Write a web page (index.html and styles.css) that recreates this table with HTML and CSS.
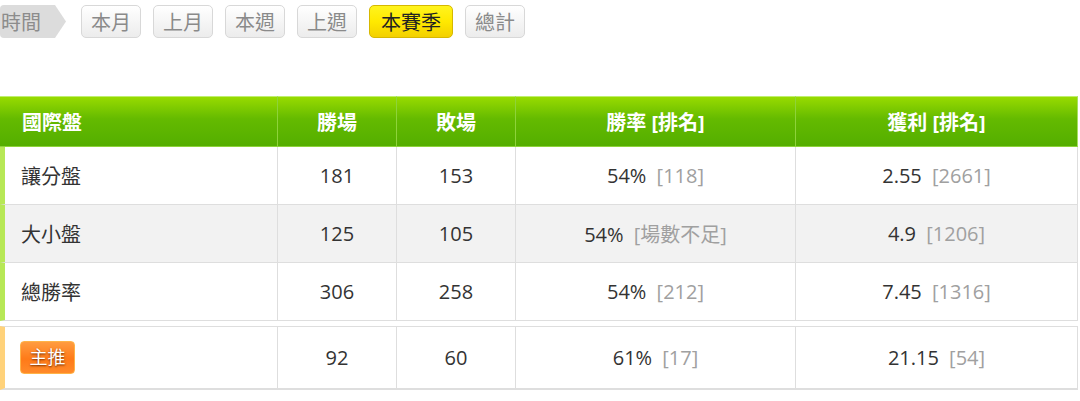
FILE: index.html
```html
<!DOCTYPE html>
<html lang="zh-Hant">
<head>
  <meta charset="UTF-8">
  <title>國際盤</title>
  <link rel="stylesheet" href="styles.css">
</head>
<body>
  <div class="filter-bar">
    <span class="filter-label">時間</span>
    <a class="filter-btn">本月</a>
    <a class="filter-btn">上月</a>
    <a class="filter-btn">本週</a>
    <a class="filter-btn">上週</a>
    <a class="filter-btn active">本賽季</a>
    <a class="filter-btn">總計</a>
  </div>

  <table class="stats">
    <colgroup>
      <col class="c-name"><col class="c-num"><col class="c-num"><col class="c-rate"><col class="c-profit">
    </colgroup>
    <thead>
      <tr>
        <th class="name">國際盤</th>
        <th>勝場</th>
        <th>敗場</th>
        <th>勝率 [排名]</th>
        <th>獲利 [排名]</th>
      </tr>
    </thead>
    <tbody>
      <tr>
        <td class="name">讓分盤</td>
        <td>181</td>
        <td>153</td>
        <td>54% <span class="rank">[118]</span></td>
        <td>2.55 <span class="rank">[2661]</span></td>
      </tr>
      <tr class="alt">
        <td class="name">大小盤</td>
        <td>125</td>
        <td>105</td>
        <td>54% <span class="rank">[場數不足]</span></td>
        <td>4.9 <span class="rank">[1206]</span></td>
      </tr>
      <tr>
        <td class="name">總勝率</td>
        <td>306</td>
        <td>258</td>
        <td>54% <span class="rank">[212]</span></td>
        <td>7.45 <span class="rank">[1316]</span></td>
      </tr>
    </tbody>
  </table>

  <table class="stats featured">
    <colgroup>
      <col class="c-name"><col class="c-num"><col class="c-num"><col class="c-rate"><col class="c-profit">
    </colgroup>
    <tbody>
      <tr>
        <td class="name"><span class="badge">主推</span></td>
        <td>92</td>
        <td>60</td>
        <td>61% <span class="rank">[17]</span></td>
        <td>21.15 <span class="rank">[54]</span></td>
      </tr>
    </tbody>
  </table>
</body>
</html>
```

FILE: styles.css
```css
body {
  margin: 0;
  background: #fff;
  font-family: "Open Sans", "Noto Sans CJK TC", sans-serif;
  color: #333;
}

.filter-bar {
  display: flex;
  align-items: center;
  gap: 12px;
  padding-top: 5px;
  height: 33px;
}

.filter-label {
  display: flex;
  align-items: center;
  height: 33px;
  width: 66px;
  padding-left: 1px;
  box-sizing: border-box;
  background: #dcdcdc;
  color: #8c8c8c;
  font-size: 20px;
  clip-path: polygon(0 0, 55px 0, 66px 50%, 55px 100%, 0 100%);
  border-radius: 4px 0 0 4px;
  margin-right: 3px;
}

.filter-btn {
  display: flex;
  align-items: center;
  justify-content: center;
  height: 33px;
  padding: 0 9px;
  box-sizing: border-box;
  border: 1px solid #d8d8d8;
  border-radius: 5px;
  background: linear-gradient(#ffffff, #ececec);
  color: #8a8a8a;
  font-size: 20px;
}

.filter-btn.active {
  padding: 0 11px;
  background: linear-gradient(#fff41e 0%, #ffe900 50%, #f3d000 100%);
  border-color: #d6b800;
  color: #222;
}

.stats {
  width: 1078px;
  border-collapse: separate;
  border-spacing: 0;
  table-layout: fixed;
  font-size: 20px;
}

.stats:first-of-type {
  margin-top: 58px;
}

.c-name { width: 278px; }
.c-num { width: 119px; }
.c-rate { width: 280px; }
.c-profit { width: 282px; }

.stats th {
  height: 51px;
  padding: 0;
  box-sizing: border-box;
  background: linear-gradient(#98db00 0%, #64ba00 45%, #54ae00 100%);
  color: #fff;
  font-weight: bold;
  text-align: center;
  border-top: 1px solid #bfee70;
  border-right: 1px solid #8ed33a;
  border-bottom: 1px solid #8ed33a;
}

.stats th:last-child {
  border-right-color: #a6e060;
}

.stats th.name {
  text-align: left;
  padding-left: 22px;
}

.stats td {
  height: 58px;
  padding: 0;
  box-sizing: border-box;
  text-align: center;
  border-right: 1px solid #dedede;
  border-bottom: 1px solid #dedede;
}

.stats tr.alt td {
  background: #f2f2f2;
}

.stats td.name {
  text-align: left;
  padding-left: 16px;
  border-left: 5px solid #b7e856;
}

.rank {
  color: #a0a0a0;
  margin-left: 5px;
}

.featured {
  margin-top: 5px;
}

.featured td {
  height: 64px;
  border-top: 1px solid #dedede;
  border-bottom: 2px solid #dedede;
}

.featured td.name {
  padding-left: 15px;
  border-left-color: #ffd27a;
}

.badge {
  display: inline-block;
  width: 55px;
  height: 33px;
  line-height: 31px;
  text-align: center;
  border: 1px solid #ffb347;
  border-radius: 4px;
  box-sizing: border-box;
  background: linear-gradient(#ff9c40 0%, #ff7a18 55%, #ff8a2a 100%);
  color: #fff;
  font-size: 18px;
  text-shadow: 0 1px 2px #6a2800;
}
```
